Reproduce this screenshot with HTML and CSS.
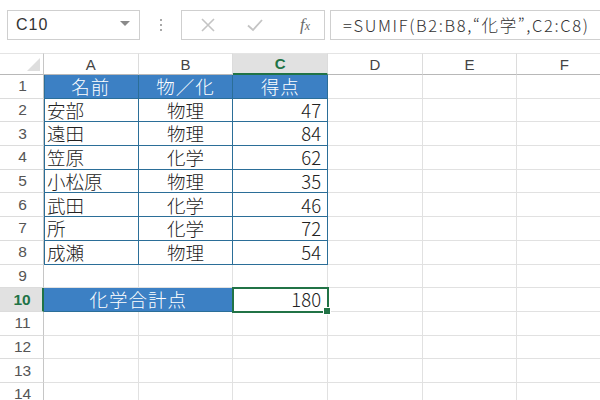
FILE: index.html
```html
<!DOCTYPE html>
<html lang="ja">
<head>
<meta charset="utf-8">
<link rel="stylesheet" href="styles.css">
</head>
<body>
<div class="app">
  <div class="toolbar">
    <div class="namebox">
      <span class="nb-text">C10</span>
      <span class="nb-arrow"></span>
    </div>
    <div class="dots"><i></i><i></i><i></i></div>
    <div class="btnbox">
      <svg class="ico" width="16" height="16" viewBox="0 0 16 16"><path d="M2 2 L14 14 M14 2 L2 14" stroke="#c4c4c4" stroke-width="1.6" fill="none"/></svg>
      <svg class="ico" width="18" height="16" viewBox="0 0 18 16"><path d="M2 8.5 L7 13 L16 3" stroke="#c4c4c4" stroke-width="1.8" fill="none"/></svg>
      <span class="fx">f<small>x</small></span>
    </div>
    <div class="formula">=SUMIF(B2:B8,“化学”,C2:C8)</div>
  </div>

  <div class="grid">
    <div class="corner"><span class="tri"></span></div>
    <div class="ch">A</div>
    <div class="ch">B</div>
    <div class="ch ch-sel">C</div>
    <div class="ch">D</div>
    <div class="ch">E</div>
    <div class="ch">F</div>

    <div class="rh">1</div>
    <div class="c t th ta">名前</div>
    <div class="c t th">物／化</div>
    <div class="c t th">得点</div>
    <div class="c"></div><div class="c"></div><div class="c"></div>

    <div class="rh">2</div>
    <div class="c t ta l">安部</div><div class="c t m">物理</div><div class="c t r">47</div>
    <div class="c"></div><div class="c"></div><div class="c"></div>

    <div class="rh">3</div>
    <div class="c t ta l">遠田</div><div class="c t m">物理</div><div class="c t r">84</div>
    <div class="c"></div><div class="c"></div><div class="c"></div>

    <div class="rh">4</div>
    <div class="c t ta l">笠原</div><div class="c t m">化学</div><div class="c t r">62</div>
    <div class="c"></div><div class="c"></div><div class="c"></div>

    <div class="rh">5</div>
    <div class="c t ta l">小松原</div><div class="c t m">物理</div><div class="c t r">35</div>
    <div class="c"></div><div class="c"></div><div class="c"></div>

    <div class="rh">6</div>
    <div class="c t ta l">武田</div><div class="c t m">化学</div><div class="c t r">46</div>
    <div class="c"></div><div class="c"></div><div class="c"></div>

    <div class="rh">7</div>
    <div class="c t ta l">所</div><div class="c t m">化学</div><div class="c t r">72</div>
    <div class="c"></div><div class="c"></div><div class="c"></div>

    <div class="rh">8</div>
    <div class="c t ta l">成瀬</div><div class="c t m">物理</div><div class="c t r">54</div>
    <div class="c"></div><div class="c"></div><div class="c"></div>

    <div class="rh">9</div>
    <div class="c"></div><div class="c"></div><div class="c"></div>
    <div class="c"></div><div class="c"></div><div class="c"></div>

    <div class="rh rh-sel">10</div>
    <div class="c merged">化学合計点</div>
    <div class="c r sel">180<span class="handle"></span></div>
    <div class="c"></div><div class="c"></div><div class="c"></div>

    <div class="rh">11</div>
    <div class="c"></div><div class="c"></div><div class="c"></div>
    <div class="c"></div><div class="c"></div><div class="c"></div>

    <div class="rh">12</div>
    <div class="c"></div><div class="c"></div><div class="c"></div>
    <div class="c"></div><div class="c"></div><div class="c"></div>

    <div class="rh">13</div>
    <div class="c"></div><div class="c"></div><div class="c"></div>
    <div class="c"></div><div class="c"></div><div class="c"></div>

    <div class="rh">14</div>
    <div class="c"></div><div class="c"></div><div class="c"></div>
    <div class="c"></div><div class="c"></div><div class="c"></div>
  </div>
</div>
</body>
</html>
```

FILE: styles.css
```css
html, body {
  margin: 0;
  padding: 0;
  background: #ffffff;
}
body {
  width: 600px;
  height: 400px;
  overflow: hidden;
  font-family: "Noto Sans CJK JP", "Liberation Sans", sans-serif;
  color: #222;
}
.app {
  width: 600px;
  height: 400px;
  overflow: hidden;
}
.toolbar {
  height: 53px;
  box-sizing: border-box;
  padding: 10px 0 0 7px;
  display: flex;
  align-items: flex-start;
}
.namebox {
  width: 133px;
  height: 30px;
  box-sizing: border-box;
  border: 1px solid #cfcfcf;
  display: flex;
  align-items: center;
  justify-content: space-between;
  padding: 0 9px 0 8px;
}
.nb-text {
  font-family: "Liberation Sans", sans-serif;
  font-size: 16px;
  color: #333;
  letter-spacing: 1px;
}
.nb-arrow {
  width: 0;
  height: 0;
  border-left: 5px solid transparent;
  border-right: 5px solid transparent;
  border-top: 5px solid #8a8a8a;
  margin-bottom: 3px;
}
.dots {
  width: 41px;
  height: 30px;
  display: flex;
  flex-direction: column;
  align-items: center;
  justify-content: center;
  gap: 3px;
}
.dots i {
  width: 2px;
  height: 2px;
  background: #a8a8a8;
  display: block;
}
.btnbox {
  width: 144px;
  height: 30px;
  box-sizing: border-box;
  border: 1px solid #cfcfcf;
  display: flex;
  align-items: center;
  padding: 0 0 0 18px;
  gap: 30px;
}
.ico { display: block; }
.fx {
  font-family: "Liberation Serif", serif;
  font-style: italic;
  font-size: 17px;
  color: #6a6a6a;
  margin-left: 6px;
}
.fx small {
  font-size: 12px;
}
.formula {
  margin-left: 5px;
  flex: 1;
  height: 30px;
  box-sizing: border-box;
  border: 1px solid #cfcfcf;
  border-right: none;
  padding: 0 0 0 12px;
  display: flex;
  align-items: center;
  font-size: 16.5px;
  font-weight: 300;
  letter-spacing: 1.65px;
  color: #333;
  white-space: nowrap;
  overflow: hidden;
}

.grid {
  display: grid;
  grid-template-columns: 44px repeat(6, 94.7px);
  grid-template-rows: 22px repeat(14, 23.7px);
}
.corner {
  border-right: 1px solid #c6c6c6;
  border-bottom: 1px solid #b8b8b8;
  border-top: 1px solid #e4e4e4;
  display: flex;
  justify-content: flex-end;
  align-items: flex-end;
  padding: 0 3px 3px 0;
}
.tri {
  width: 0;
  height: 0;
  border-left: 13px solid transparent;
  border-bottom: 13px solid #dedede;
}
.ch {
  border-top: 1px solid #e4e4e4;
  border-right: 1px solid #dcdcdc;
  border-bottom: 1px solid #b8b8b8;
  display: flex;
  align-items: center;
  justify-content: center;
  font-family: "Liberation Sans", sans-serif;
  font-size: 15px;
  color: #444;
}
.ch-sel {
  background: #e1e1e1;
  color: #217346;
  font-weight: bold;
  border-bottom: 2px solid #217346;
}
.rh {
  border-right: 1px solid #c6c6c6;
  border-bottom: 1px solid #dcdcdc;
  display: flex;
  align-items: center;
  justify-content: center;
  font-family: "Liberation Sans", sans-serif;
  font-size: 15.5px;
  color: #555;
  padding-left: 2px;
}
.rh-sel {
  background: #e1e1e1;
  color: #217346;
  font-weight: bold;
  border-right: 2px solid #217346;
}
.c {
  border-right: 1px solid #e1e1e1;
  border-bottom: 1px solid #e1e1e1;
  display: flex;
  align-items: center;
  font-size: 18.5px;
  font-weight: 300;
  line-height: 1;
  color: #222;
  white-space: nowrap;
  position: relative;
}
.t {
  border-right: 1px solid #2b6e98;
  border-bottom: 1px solid #2b6e98;
}
.ta {
  box-shadow: inset 1px 0 0 #2b6e98;
}
.th {
  background: #3c80c4;
  color: #ffffff;
  justify-content: center;
  letter-spacing: 1px;
}
.l { padding-left: 3px; }
.m { justify-content: center; }
.r { justify-content: flex-end; padding-right: 6px; }
.merged {
  grid-column: span 2;
  background: #3c80c4;
  color: #ffffff;
  justify-content: center;
  letter-spacing: 1px;
  border-right: 1px solid #2b6e98;
  border-bottom: 1px solid #2b6e98;
}
.sel {
  outline: 2px solid #217346;
  outline-offset: -1px;
  z-index: 2;
}
.handle {
  position: absolute;
  right: -4px;
  bottom: -4px;
  width: 6px;
  height: 6px;
  background: #217346;
  border: 1px solid #ffffff;
}
```
